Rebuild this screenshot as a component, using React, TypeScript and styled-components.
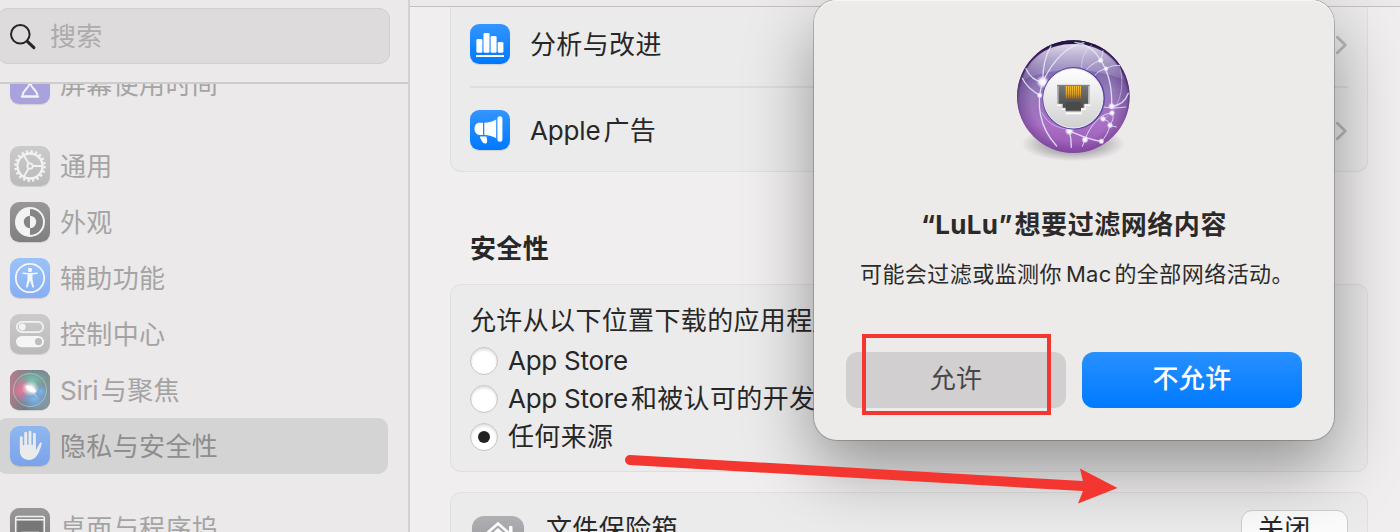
import React from "react";
import styled, { createGlobalStyle } from "styled-components";

const GlobalStyle = createGlobalStyle`
  *, *::before, *::after { box-sizing: border-box; }
  body {
    margin: 0;
    overflow: hidden;
    background: #f0eeef;
    font-family: Inter, "Noto Sans CJK SC", sans-serif;
    font-size: 26px;
    color: #272727;
  }
`;

const Window = styled.div`
  position: relative;
  display: flex;
  width: 1400px;
  height: 532px;
  overflow: hidden;
`;

const Sidebar = styled.aside`
  display: flex;
  flex-direction: column;
  width: 410px;
  flex: none;
  background: #ebe9ea;
  border-right: 2px solid #d3d1d2;
`;

const SearchHeader = styled.header`
  flex: none;
  height: 84px;
  padding-top: 8px;
  border-bottom: 2px solid #cecccd;
`;

const SearchField = styled.div`
  display: flex;
  align-items: center;
  gap: 13px;
  width: 393px;
  height: 56px;
  margin-left: -3px;
  padding: 2px 0 0 11px;
  border: 1px solid #d0cecf;
  border-radius: 11px;
  background: #dddbdc;
  color: #adabac;
`;

const SidebarList = styled.nav`
  flex: 1;
  min-height: 0;
  overflow: hidden;
`;

const SidebarGroup = styled.div<{ $offset: number }>`
  margin-top: ${(p) => p.$offset}px;
`;

const Label = styled.span<{ $spacing?: number; $size?: number; $weight?: number }>`
  display: inline-flex;
  align-items: center;
  height: 36px;
  line-height: 36px;
  font-size: ${(p) => p.$size ?? 26}px;
  font-weight: ${(p) => p.$weight ?? 400};
  letter-spacing: ${(p) => p.$spacing ?? 0.35}px;
  white-space: pre;
`;

const SidebarItem = styled.div<{ $selected?: boolean }>`
  display: flex;
  align-items: center;
  gap: 10px;
  width: 391px;
  height: 56px;
  margin-left: -3px;
  padding-left: 13px;
  border-radius: 10px;
  background: ${(p) => (p.$selected ? "#d4d4d4" : "transparent")};
  color: ${(p) => (p.$selected ? "#8f8d8d" : "#a5a4a4")};
  ${Label} { margin-top: 2px; }
`;

const Latin = styled.span<{ $spacing?: number; $lead?: number; $gap?: number }>`
  letter-spacing: ${(p) => p.$spacing ?? -0.15}px;
  margin: 0 ${(p) => p.$gap ?? 3}px 0 ${(p) => p.$lead ?? 0}px;
`;

const IconTile = styled.span<{ $fill: string; $size?: number }>`
  display: flex;
  align-items: center;
  justify-content: center;
  flex: none;
  width: ${(p) => p.$size ?? 40}px;
  height: ${(p) => p.$size ?? 40}px;
  border-radius: ${(p) => (p.$size ?? 40) * 0.23}px;
  background: ${(p) => p.$fill};
  box-shadow: 0 1px 1px rgba(0, 0, 0, 0.12);
  overflow: hidden;
  svg { display: block; }
`;

const Main = styled.main`
  display: flex;
  flex-direction: column;
  flex: 1;
  min-width: 0;
  background: #f0eeef;
`;

const Toolbar = styled.div`
  flex: none;
  height: 7px;
  background: #ebe9ea;
  border-bottom: 1px solid #c3c1c2;
`;

const Content = styled.div`
  flex: 1;
  min-height: 0;
  overflow: hidden;
  padding: 0 32px 0 40px;
`;

const Card = styled.section<{ $height: number; $top?: boolean }>`
  height: ${(p) => p.$height}px;
  padding: 0 19px;
  border: 1px solid #e0dfdf;
  border-radius: ${(p) => (p.$top ? "0 0 11px 11px" : "11px")};
  border-top-width: ${(p) => (p.$top ? 0 : 1)}px;
  background: #ebebeb;
`;

const LinkRow = styled.div<{ $height: number; $pad: number; $divided?: boolean }>`
  display: flex;
  align-items: flex-start;
  height: ${(p) => p.$height}px;
  padding-top: ${(p) => p.$pad}px;
  border-bottom: ${(p) => (p.$divided ? "2px solid #dfdede" : "none")};
  ${Label} { margin: 3px 0 0 20px; }
`;

const Chevron = styled.svg`
  margin: 10px 0 0 auto;
`;

const SectionTitle = styled.h2`
  display: flex;
  align-items: center;
  height: 112px;
  margin: 0;
  padding: 42px 0 0 20px;
  font-size: 26px;
`;

const DownloadPolicy = styled.div`
  display: flex;
  flex-direction: column;
  padding-top: 18px;
`;

const PolicyOptions = styled.div`
  padding-top: 3px;
`;

const RadioRow = styled.label`
  display: flex;
  align-items: center;
  gap: 10px;
  height: 38px;
`;

const Radio = styled.span<{ $checked?: boolean }>`
  display: flex;
  align-items: center;
  justify-content: center;
  width: 28px;
  height: 28px;
  border: 1px solid #c6c5c5;
  border-radius: 50%;
  background: #fff;
  box-shadow: inset 0 2px 3px rgba(0, 0, 0, 0.13);
  &::after {
    content: "";
    width: 12px;
    height: 12px;
    border-radius: 50%;
    background: ${(p) => (p.$checked ? "#222" : "transparent")};
  }
`;

const VaultRow = styled.div`
  display: flex;
  align-items: flex-start;
  padding: 23px 0 0 2px;
  > ${Label} { margin: -5px 0 0 22px; }
`;

const CloseButton = styled.button`
  display: flex;
  align-items: flex-start;
  width: 107px;
  height: 56px;
  margin: -6px 0 0 auto;
  padding: 0 0 0 16px;
  border: 1px solid #cfcece;
  border-radius: 11px;
  background: #fbfbfb;
  color: #272727;
  font: inherit;
`;

const Dialog = styled.div`
  position: absolute;
  left: 814px;
  top: 0;
  display: flex;
  flex-direction: column;
  align-items: center;
  width: 520px;
  height: 440px;
  padding: 30px 32px 32px;
  border-radius: 23px;
  background: #ecebe9;
  box-shadow: 0 0 0 1px rgba(0, 0, 0, 0.2), 0 28px 68px rgba(0, 0, 0, 0.38),
    inset 0 1px 0 #f8f8f7;
  color: #2c2a29;
`;

const GlobeFigure = styled.div`
  height: 140px;
  padding-left: 2px;
`;

const DialogTitle = styled.h1`
  margin: 37px 0 0;
  height: 36px;
  font-size: 26px;
  line-height: 36px;
`;

const DialogMessage = styled.p`
  margin: 13px 0 0;
  height: 36px;
  padding-left: 6px;
  font-size: 22px;
  line-height: 36px;
`;

const DialogActions = styled.div`
  display: grid;
  grid-template-columns: 220px 220px;
  gap: 16px;
  margin-top: auto;
`;

const DialogButton = styled.button<{ $primary?: boolean }>`
  display: flex;
  align-items: center;
  justify-content: center;
  height: 56px;
  padding: 0 0 2px;
  border: 0;
  border-radius: 12px;
  background: ${(p) => (p.$primary ? "linear-gradient(#2890ff, #007aff)" : "#d1cfcf")};
  color: ${(p) => (p.$primary ? "#fff" : "#484747")};
  font: inherit;
`;

const HighlightBox = styled.div`
  position: absolute;
  left: 862px;
  top: 334px;
  width: 189px;
  height: 81px;
  border: 4px solid #f3362f;
`;

const ArrowOverlay = styled.svg`
  position: absolute;
  left: 620px;
  top: 450px;
`;

const HourglassIcon = () => (
  <svg width="40" height="40" viewBox="0 0 40 40" fill="none" stroke="#f3f2f7" strokeWidth="2">
    <path d="M12.5 7h15M14.5 7c0 7 3.2 9 4.500 12v2c-1.500 4-5.800 5-6.500 10.500M25.500 7c0 7-3.200 9-4.500 12v2c1.500 4 5.800 5 6.500 10.500" />
    <path d="M12.200 32.500h15.600" strokeWidth="2.600" strokeLinecap="round" />
  </svg>
);

const GearIcon = () => (
  <svg width="40" height="40" viewBox="0 0 40 40" fill="none" stroke="#f2f2f2">
    <circle cx="20" cy="20" r="14.600" strokeWidth="2.600" strokeDasharray="2.290 2.297" />
    <circle cx="20" cy="20" r="12.500" strokeWidth="2.300" />
    <circle cx="20" cy="20" r="2.700" strokeWidth="1.700" />
    <path d="M22.700 20h9.600M18.600 17.600l-4.800-8.300M18.600 22.400l-4.800 8.300" strokeWidth="1.900" />
  </svg>
);

const AppearanceIcon = () => (
  <svg width="40" height="40" viewBox="0 0 40 40">
    <circle cx="20" cy="20" r="15" fill="#f3f3f3" />
    <path d="M20 7a13 13 0 0 1 0 26z" fill="#858585" />
    <path d="M20 13.800a6.200 6.200 0 0 0 0 12.400z" fill="#858585" />
    <path d="M20 13.800a6.200 6.200 0 0 1 0 12.400z" fill="#f3f3f3" />
  </svg>
);

const AccessibilityIcon = () => (
  <svg width="40" height="40" viewBox="0 0 40 40">
    <circle cx="20" cy="20" r="14.200" fill="none" stroke="#f4f6fa" strokeWidth="1.800" />
    <circle cx="20" cy="12" r="2.200" fill="#f4f6fa" />
    <path d="M13 15.200l5 .6h4l5-.6" fill="none" stroke="#f4f6fa" strokeWidth="1.500" strokeLinecap="round" />
    <path d="M17.500 15.500h5v6l1.600 7.700-1.500.5-2.600-7.200-2.600 7.200-1.500-.5 1.600-7.700z" fill="#f4f6fa" />
  </svg>
);

const ControlIcon = () => (
  <svg width="40" height="40" viewBox="0 0 40 40">
    <rect x="6.800" y="7.800" width="26.400" height="10.400" rx="5.200" fill="none" stroke="#f3f3f3" strokeWidth="1.700" />
    <circle cx="12.200" cy="13" r="3.400" fill="#f3f3f3" />
    <rect x="6" y="22" width="28" height="11.200" rx="5.600" fill="#f5f5f5" />
    <circle cx="28.500" cy="27.600" r="3.600" fill="#bdbdbe" />
  </svg>
);

const SiriIcon = () => (
  <svg width="40" height="40" viewBox="0 0 40 40">
    <defs>
      <linearGradient id="siriBase" x1="0" y1=".3" x2="1" y2=".5">
        <stop offset="0" stopColor="#b17e8c" />
        <stop offset=".5" stopColor="#707f86" />
        <stop offset="1" stopColor="#86969b" />
      </linearGradient>
      <radialGradient id="siriPink"><stop offset="0" stopColor="#f3769c" /><stop offset="1" stopColor="#e2799c" stopOpacity="0" /></radialGradient>
      <radialGradient id="siriGreen"><stop offset="0" stopColor="#7bc3ae" /><stop offset="1" stopColor="#7bc3ae" stopOpacity="0" /></radialGradient>
      <radialGradient id="siriBlue"><stop offset="0" stopColor="#78b9f4" /><stop offset="1" stopColor="#78a9e4" stopOpacity="0" /></radialGradient>
      <radialGradient id="siriGlow"><stop offset="0" stopColor="#fff" /><stop offset=".3" stopColor="#fff" stopOpacity=".8" /><stop offset="1" stopColor="#fff" stopOpacity="0" /></radialGradient>
    </defs>
    <rect width="40" height="40" fill="url(#siriBase)" />
    <ellipse cx="22" cy="10" rx="16" ry="11" fill="url(#siriGreen)" />
    <ellipse cx="12" cy="20" rx="12" ry="13" fill="url(#siriPink)" />
    <ellipse cx="24" cy="29" rx="15" ry="12" fill="url(#siriBlue)" />
    <ellipse cx="31" cy="21" rx="7" ry="7" fill="url(#siriBlue)" />
    <circle cx="20" cy="20" r="16.500" fill="none" stroke="#b9d0d0" strokeOpacity=".65" />
    <ellipse cx="20.500" cy="18.500" rx="9" ry="8" fill="url(#siriGlow)" />
    <path d="M12 14l11 5 6 10-11-8z" fill="#fff" opacity=".25" />
    <ellipse cx="21" cy="19" rx="6" ry="2.500" fill="#fff" opacity=".85" transform="rotate(30 21 19)" />
  </svg>
);

const HandIcon = () => (
  <svg width="40" height="40" viewBox="0 0 40 40" fill="none" stroke="#ebebeb" strokeLinecap="round" strokeLinejoin="round">
    <path d="M11.300 11.700v13M15.700 7.200v14M20 6.200v15M24.400 8.200v14" strokeWidth="2.900" />
    <path d="M9.900 20c3-1 11-1.600 15.900-.8v4.800c1.500-1.200 2.600-5 4.200-7.200.8-.8 2-.2 1.800.9-1.200 4.200-2.500 8.300-4.500 11.400-1.800 3-4.300 4.800-7.900 4.800-6 0-9.500-3.500-9.500-9z" fill="#ebebeb" stroke="none" />
  </svg>
);

const DesktopIcon = () => (
  <svg width="40" height="40" viewBox="0 0 40 40" fill="none" stroke="#f0f0f0">
    <rect x="5.700" y="8.500" width="28.600" height="23" rx="1.800" strokeWidth="1.500" />
    <path d="M6 11.800h28" strokeWidth="1.500" />
    <rect x="7.500" y="13" width="25" height="17" fill="#777" stroke="none" />
    <path d="M11 23.800h18" strokeWidth="1" stroke="#aaa" />
  </svg>
);

const BarsIcon = () => (
  <svg width="40" height="40" viewBox="0 0 40 40" fill="#fff">
    <rect x="6.400" y="15" width="6" height="13.700" rx="1.300" />
    <rect x="13.500" y="9" width="6" height="19.700" rx="1.300" />
    <rect x="20.600" y="12" width="6" height="16.700" rx="1.300" />
    <rect x="27.700" y="18" width="5.700" height="10.700" rx="1.300" />
    <rect x="6" y="31" width="28" height="2" rx=".5" />
  </svg>
);

const MegaphoneIcon = () => (
  <svg width="40" height="40" viewBox="0 0 40 40" fill="#fff">
    <rect x="27.400" y="6.200" width="5" height="25.500" rx="2.500" />
    <path d="M14.300 12.800c4.500-.2 8.700-1.300 11.900-3.300v18.800c-3.200-2-7.200-3.200-11.900-3.400z" />
    <path d="M13 12.800H9.500c-3 0-5 2.600-5 6s2 6.100 5 6.100H13z" />
    <path d="M9.800 26.600h6.700c.3 2 .8 3.700.6 5.300-.3 1.700-2.700 2.200-4 .9-1.500-1.600-2.700-3.900-3.300-6.200z" />
  </svg>
);

const HouseIcon = () => (
  <svg width="52" height="52" viewBox="0 0 52 52" fill="none" stroke="#fff" strokeWidth="2.600">
    <path d="M9 22.500L26 7.500l17 15" strokeLinecap="round" />
    <path d="M37.500 16v-5.500h2.500v8" fill="#fff" strokeWidth="1" />
    <path d="M14 22.500l12-10.500L38 22.500V43H14z" fill="#fff" stroke="none" />
    <circle cx="26" cy="28" r="9" fill="#929196" stroke="none" />
  </svg>
);

const SearchIcon = () => (
  <svg width="28" height="28" viewBox="0 0 28 28" fill="none" stroke="#262526" strokeLinecap="round">
    <circle cx="11.300" cy="11.300" r="9.300" strokeWidth="2" />
    <path d="M18.300 18.300l6.600 6.400" strokeWidth="3" />
  </svg>
);

const RowChevron = () => (
  <Chevron width="15" height="22" viewBox="0 0 15 22" fill="none" stroke="#b9b9b9" strokeWidth="2.800" strokeLinecap="round" strokeLinejoin="round">
    <path d="M4.300 3.200l8 7.800-8 7.800" />
  </Chevron>
);

const hubNodes = [
  [128, 156, 14], [119, 196, 7], [302, 91, 7], [318, 116, 6], [208, 303, 10], [255, 329, 8],
  [304, 334, 7], [330, 286, 7], [309, 267, 7], [336, 249, 7], [335, 229, 8],
];

const NetworkGlobe = () => (
  <svg width="150" height="140" viewBox="0 0 450 420">
    <defs>
      <linearGradient id="orb" x1="0" y1="0" x2="0" y2="1">
        <stop offset="0" stopColor="#6a5794" />
        <stop offset=".45" stopColor="#9379b8" />
        <stop offset=".75" stopColor="#aa70c4" />
        <stop offset="1" stopColor="#9a56b5" />
      </linearGradient>
      <radialGradient id="orbRim" cx=".5" cy=".53" r=".51">
        <stop offset=".72" stopColor="#412061" stopOpacity="0" />
        <stop offset=".93" stopColor="#4b236f" stopOpacity=".35" />
        <stop offset="1" stopColor="#351356" stopOpacity=".85" />
      </radialGradient>
      <linearGradient id="gloss" x1="0" y1="0" x2="0" y2="1">
        <stop offset="0" stopColor="#fff" stopOpacity=".82" />
        <stop offset="1" stopColor="#d6d6f5" stopOpacity=".12" />
      </linearGradient>
      <linearGradient id="hub" x1="0" y1="0" x2="0" y2="1">
        <stop offset="0" stopColor="#fff" />
        <stop offset="1" stopColor="#d0d0d0" />
      </linearGradient>
      <linearGradient id="socket" x1="0" y1="0" x2="0" y2="1">
        <stop offset="0" stopColor="#777" />
        <stop offset="1" stopColor="#444" />
      </linearGradient>
      <linearGradient id="pins" gradientUnits="userSpaceOnUse" x1="0" y1="168" x2="0" y2="206">
        <stop offset="0" stopColor="#ffc52c" />
        <stop offset=".6" stopColor="#e9a52a" />
        <stop offset="1" stopColor="#8c6630" />
      </linearGradient>
      <radialGradient id="floor">
        <stop offset="0" stopColor="#3c3346" stopOpacity=".6" />
        <stop offset=".6" stopColor="#3c3346" stopOpacity=".28" />
        <stop offset="1" stopColor="#3c3346" stopOpacity="0" />
      </radialGradient>
      <radialGradient id="spark">
        <stop offset="0" stopColor="#fff" />
        <stop offset=".5" stopColor="#f4edff" stopOpacity=".95" />
        <stop offset="1" stopColor="#e8dcff" stopOpacity="0" />
      </radialGradient>
      <clipPath id="orbClip"><circle cx="220" cy="200" r="169" /></clipPath>
    </defs>
    <ellipse cx="220" cy="342" rx="155" ry="52" fill="url(#floor)" />
    <circle cx="220" cy="200" r="169" fill="url(#orb)" />
    <g clipPath="url(#orbClip)">
      <circle cx="220" cy="200" r="170" fill="url(#orbRim)" />
      <path d="M50 30h340v110C370 80 300 41 220 41S70 80 50 140z" fill="#21133b" opacity=".82" />
      <path d="M66 150C85 82 145 42 220 42s135 40 154 108c-50-20-100-30-154-30S116 130 66 150z" fill="url(#gloss)" />
      <g fill="none" stroke="#e6ecff" strokeWidth="4" opacity=".85" strokeLinecap="round">
        <path d="M128 156C128 110 135 78 153 48" />
        <path d="M128 156C155 100 195 48 252 38" />
        <path d="M128 156C105 153 88 138 78 116" />
        <path d="M119 196C98 184 78 168 67 145" />
        <path d="M128 156C107 220 118 292 170 348" />
        <path d="M302 91C288 66 262 42 225 37" />
        <path d="M302 91C306 76 309 70 309 62" strokeWidth="3" />
        <path d="M302 91C328 130 337 172 335 229" />
        <path d="M318 116C335 107 344 105 359 107" strokeWidth="3" />
        <path d="M302 91C278 98 265 112 252 128" strokeWidth="3" />
        <path d="M318 116C300 120 286 130 281 142" strokeWidth="3" />
        <path d="M245 120C243 85 253 62 275 45" strokeWidth="3" opacity=".6" />
        <path d="M357 105C379 165 358 245 309 267" strokeWidth="3" opacity=".5" />
        <path d="M335 229C360 227 377 212 385 190" />
        <path d="M310 231C330 234 352 235 377 231" strokeWidth="3" />
        <path d="M336 249C304 249 270 285 255 329" strokeWidth="3" />
        <path d="M309 267C322 270 329 277 330 286M330 286L349 291M330 286C325 307 316 322 304 334" strokeWidth="3" />
        <path d="M336 249C345 263 335 276 330 286" strokeWidth="3" />
        <path d="M208 303C240 316 272 331 304 334" />
        <path d="M208 303C213 322 214 337 214 352" />
        <path d="M255 329L247 349" strokeWidth="3" />
        <path d="M126 248C143 286 182 299 224 298" strokeWidth="3" opacity=".6" />
      </g>
      {hubNodes.map(([x, y, r]) => (
        <circle key={`${x}-${y}`} cx={x} cy={y} r={r * 1.4} fill="url(#spark)" />
      ))}
    </g>
    <circle cx="221" cy="205" r="94" fill="#5b48a9" />
    <circle cx="220" cy="205" r="89" fill="url(#hub)" stroke="#eeeeee" strokeWidth="3" />
    <path d="M171 220v8h14v12h12v13h48v-13h12v-12h14v-8z" fill="#fff" />
    <path d="M171 165h98v58h-15v12h-11v12h-46v-12h-12v-12h-14z" fill="#b5b5b5" />
    <path d="M176 168h88v53h-13v12h-8v9h-46v-9h-8v-12h-13z" fill="url(#socket)" />
    <path d="M171 166h98" stroke="#777" strokeWidth="3" />
    <g stroke="url(#pins)" strokeWidth="3.600">
      {[199, 205, 211, 217, 223, 229, 235, 241].map((x) => (
        <path key={x} d={`M${x} 168v38`} />
      ))}
    </g>
    <path d="M200 216h42v24h-42z" fill="#4a4a4a" />
  </svg>
);

const GREY = "linear-gradient(#cbcbcc, #bababb)";
const DARK = "linear-gradient(#989898, #7f7f7f)";
const BLUE = "linear-gradient(#3395ff, #0079ff)";

const App = () => (
  <>
    <GlobalStyle />
    <Window>
      <Sidebar>
        <SearchHeader>
          <SearchField>
            <SearchIcon />
            <Label>搜索</Label>
          </SearchField>
        </SearchHeader>
        <SidebarList>
          <SidebarGroup $offset={-28}>
            <SidebarItem>
              <IconTile $fill="#a8a3de"><HourglassIcon /></IconTile>
              <Label>屏幕使用时间</Label>
            </SidebarItem>
          </SidebarGroup>
          <SidebarGroup $offset={26}>
            <SidebarItem>
              <IconTile $fill={GREY}><GearIcon /></IconTile>
              <Label>通用</Label>
            </SidebarItem>
            <SidebarItem>
              <IconTile $fill={DARK}><AppearanceIcon /></IconTile>
              <Label>外观</Label>
            </SidebarItem>
            <SidebarItem>
              <IconTile $fill="linear-gradient(#9bc3f8, #86aff4)"><AccessibilityIcon /></IconTile>
              <Label>辅助功能</Label>
            </SidebarItem>
            <SidebarItem>
              <IconTile $fill={GREY}><ControlIcon /></IconTile>
              <Label>控制中心</Label>
            </SidebarItem>
            <SidebarItem>
              <IconTile $fill="#808a90"><SiriIcon /></IconTile>
              <Label><Latin $spacing={-0.3} $gap={2.5}>Siri</Latin>与聚焦</Label>
            </SidebarItem>
            <SidebarItem $selected>
              <IconTile $fill="linear-gradient(#8fb7ef, #7ba3ea)"><HandIcon /></IconTile>
              <Label>隐私与安全性</Label>
            </SidebarItem>
          </SidebarGroup>
          <SidebarGroup $offset={26}>
            <SidebarItem>
              <IconTile $fill={DARK}><DesktopIcon /></IconTile>
              <Label>桌面与程序坞</Label>
            </SidebarItem>
          </SidebarGroup>
        </SidebarList>
      </Sidebar>

      <Main>
        <Toolbar />
        <Content>
          <Card $height={165} $top>
            <LinkRow $height={81} $pad={17} $divided>
              <IconTile $fill={BLUE}><BarsIcon /></IconTile>
              <Label>分析与改进</Label>
              <RowChevron />
            </LinkRow>
            <LinkRow $height={83} $pad={22}>
              <IconTile $fill={BLUE}><MegaphoneIcon /></IconTile>
              <Label><Latin>Apple</Latin>广告</Label>
              <RowChevron />
            </LinkRow>
          </Card>
          <SectionTitle><Label $weight={700}>安全性</Label></SectionTitle>
          <Card $height={188}>
            <DownloadPolicy>
              <Label>允许从以下位置下载的应用程序</Label>
              <PolicyOptions>
                <RadioRow><Radio /><Label><Latin $spacing={-0.25}>App Store</Latin></Label></RadioRow>
                <RadioRow><Radio /><Label><Latin $spacing={-0.25}>App Store</Latin>和被认可的开发者</Label></RadioRow>
                <RadioRow><Radio $checked /><Label>任何来源</Label></RadioRow>
              </PolicyOptions>
            </DownloadPolicy>
          </Card>
          <SidebarGroup $offset={20}>
            <Card $height={120}>
              <VaultRow>
                <IconTile $size={52} $fill="linear-gradient(#b0afb4, #8e8d92)"><HouseIcon /></IconTile>
                <Label>文件保险箱</Label>
                <CloseButton><Label>关闭</Label></CloseButton>
              </VaultRow>
            </Card>
          </SidebarGroup>
        </Content>
      </Main>

      <Dialog>
        <GlobeFigure>
          <NetworkGlobe />
        </GlobeFigure>
        <DialogTitle>
          <Label $weight={700} $spacing={0.55}><Latin $spacing={0.25} $gap={2}>“LuLu”</Latin>想要过滤网络内容</Label>
        </DialogTitle>
        <DialogMessage>
          <Label $size={22} $spacing={0.45}>可能会过滤或监测你<Latin $spacing={0.2} $lead={4}>Mac</Latin>的全部网络活动。</Label>
        </DialogMessage>
        <DialogActions>
          <DialogButton><Label>允许</Label></DialogButton>
          <DialogButton $primary><Label $weight={500}>不允许</Label></DialogButton>
        </DialogActions>
      </Dialog>

      <HighlightBox />
      <ArrowOverlay width="500" height="60" viewBox="0 0 500 60">
        <path d="M10 10L463 36" stroke="#f3362f" strokeWidth="10" strokeLinecap="round" />
        <path d="M460 18.500L497.500 38L458 53.500L463 41V31.500z" fill="#f3362f" />
      </ArrowOverlay>
    </Window>
  </>
);

export default App;
